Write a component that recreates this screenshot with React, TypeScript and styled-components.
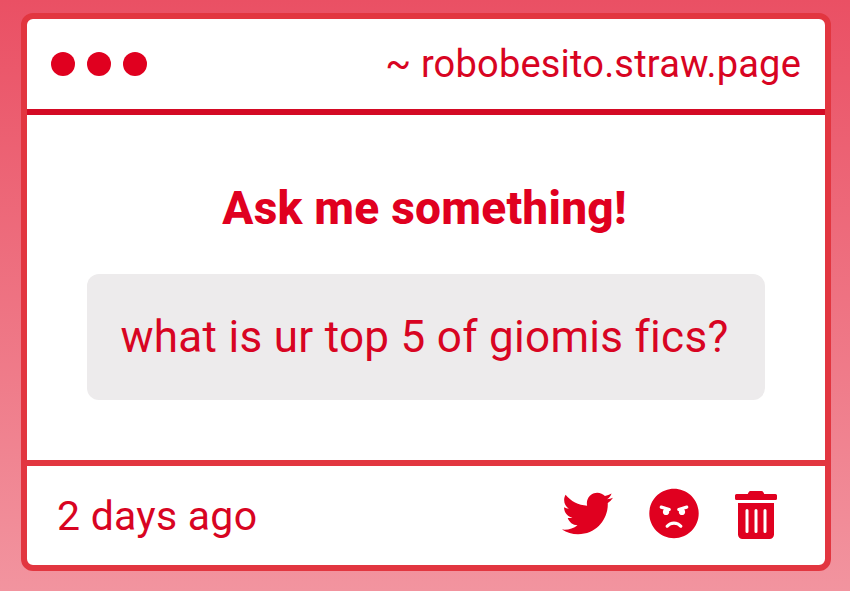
import * as React from "react"
import styled, { createGlobalStyle } from "styled-components"
import { FaTwitter, FaAngry, FaTrashAlt } from "react-icons/fa"

const RED = "#e0001f"
const TEXT_RED = "#d80422"
const BORDER_RED = "#e23640"

const App = () => {
  return (
    <Page>
      <GlobalStyle />
      <Card>
        <Header>
          <Dots>
            <Dot />
            <Dot />
            <Dot />
          </Dots>
          <Address>~ robobesito.straw.page</Address>
        </Header>
        <Body>
          <Title>Ask me something!</Title>
          <Question>what is ur top 5 of giomis fics?</Question>
        </Body>
        <Footer>
          <Time>2 days ago</Time>
          <Actions>
            <IconButton aria-label="Share on Twitter" $width={51} $height={51}>
              <FaTwitter />
            </IconButton>
            <IconButton aria-label="Block" $width={50} $height={51}>
              <FaAngry />
            </IconButton>
            <IconButton aria-label="Delete" $width={42} $height={48}>
              <FaTrashAlt />
            </IconButton>
          </Actions>
        </Footer>
      </Card>
    </Page>
  )
}

const GlobalStyle = createGlobalStyle`
  * {
    box-sizing: border-box;
  }
  body {
    margin: 0;
    font-family: Roboto, "Liberation Sans", sans-serif;
    color: ${TEXT_RED};
  }
`

const Page = styled.main`
  height: 100vh;
  padding: 13px 19px 20px 21px;
  overflow: hidden;
  background: linear-gradient(#ea5064, #f2949f);
`

const Card = styled.section`
  display: flex;
  flex-direction: column;
  height: 558px;
  border: 6px solid ${BORDER_RED};
  border-radius: 12px;
  background: #fff;
`

const Header = styled.header`
  display: flex;
  align-items: center;
  justify-content: space-between;
  height: 96px;
  padding: 0 24px;
  border-bottom: 6px solid #d40a24;
`

const Dots = styled.div`
  display: flex;
  gap: 12px;
`

const Dot = styled.span`
  width: 24px;
  height: 24px;
  border-radius: 50%;
  background: ${RED};
`

const Address = styled.span`
  font-size: 38px;
  line-height: 44px;
  letter-spacing: 0.2px;
  white-space: nowrap;
`

const Body = styled.div`
  flex: 1;
  display: flex;
  flex-direction: column;
  align-items: center;
  padding: 66px 60px 0;
`

const Title = styled.h1`
  margin: 0 0 39px;
  padding-right: 3px;
  font-size: 46px;
  font-weight: 800;
  line-height: 54px;
  letter-spacing: 0.25px;
  color: ${RED};
  white-space: nowrap;
`

const Question = styled.p`
  display: flex;
  align-items: center;
  justify-content: center;
  width: 678px;
  height: 126px;
  margin: 0;
  padding-right: 3px;
  border-radius: 12px;
  background: #edebec;
  font-size: 44px;
  letter-spacing: 0.3px;
  white-space: nowrap;
`

const Footer = styled.footer`
  display: flex;
  align-items: center;
  justify-content: space-between;
  height: 105px;
  padding: 0 48px 0 30px;
  border-top: 6px solid ${BORDER_RED};
`

const Time = styled.span`
  font-size: 41px;
  letter-spacing: 0.25px;
  white-space: nowrap;
`

const Actions = styled.div`
  display: flex;
  align-items: flex-end;
  gap: 36px;
  padding-bottom: 5px;
`

const IconButton = styled.button<{ $width: number; $height: number }>`
  display: flex;
  padding: 0;
  border: 0;
  background: none;
  color: ${RED};

  svg {
    width: ${(props) => props.$width}px;
    height: ${(props) => props.$height}px;
  }
`

export default App
